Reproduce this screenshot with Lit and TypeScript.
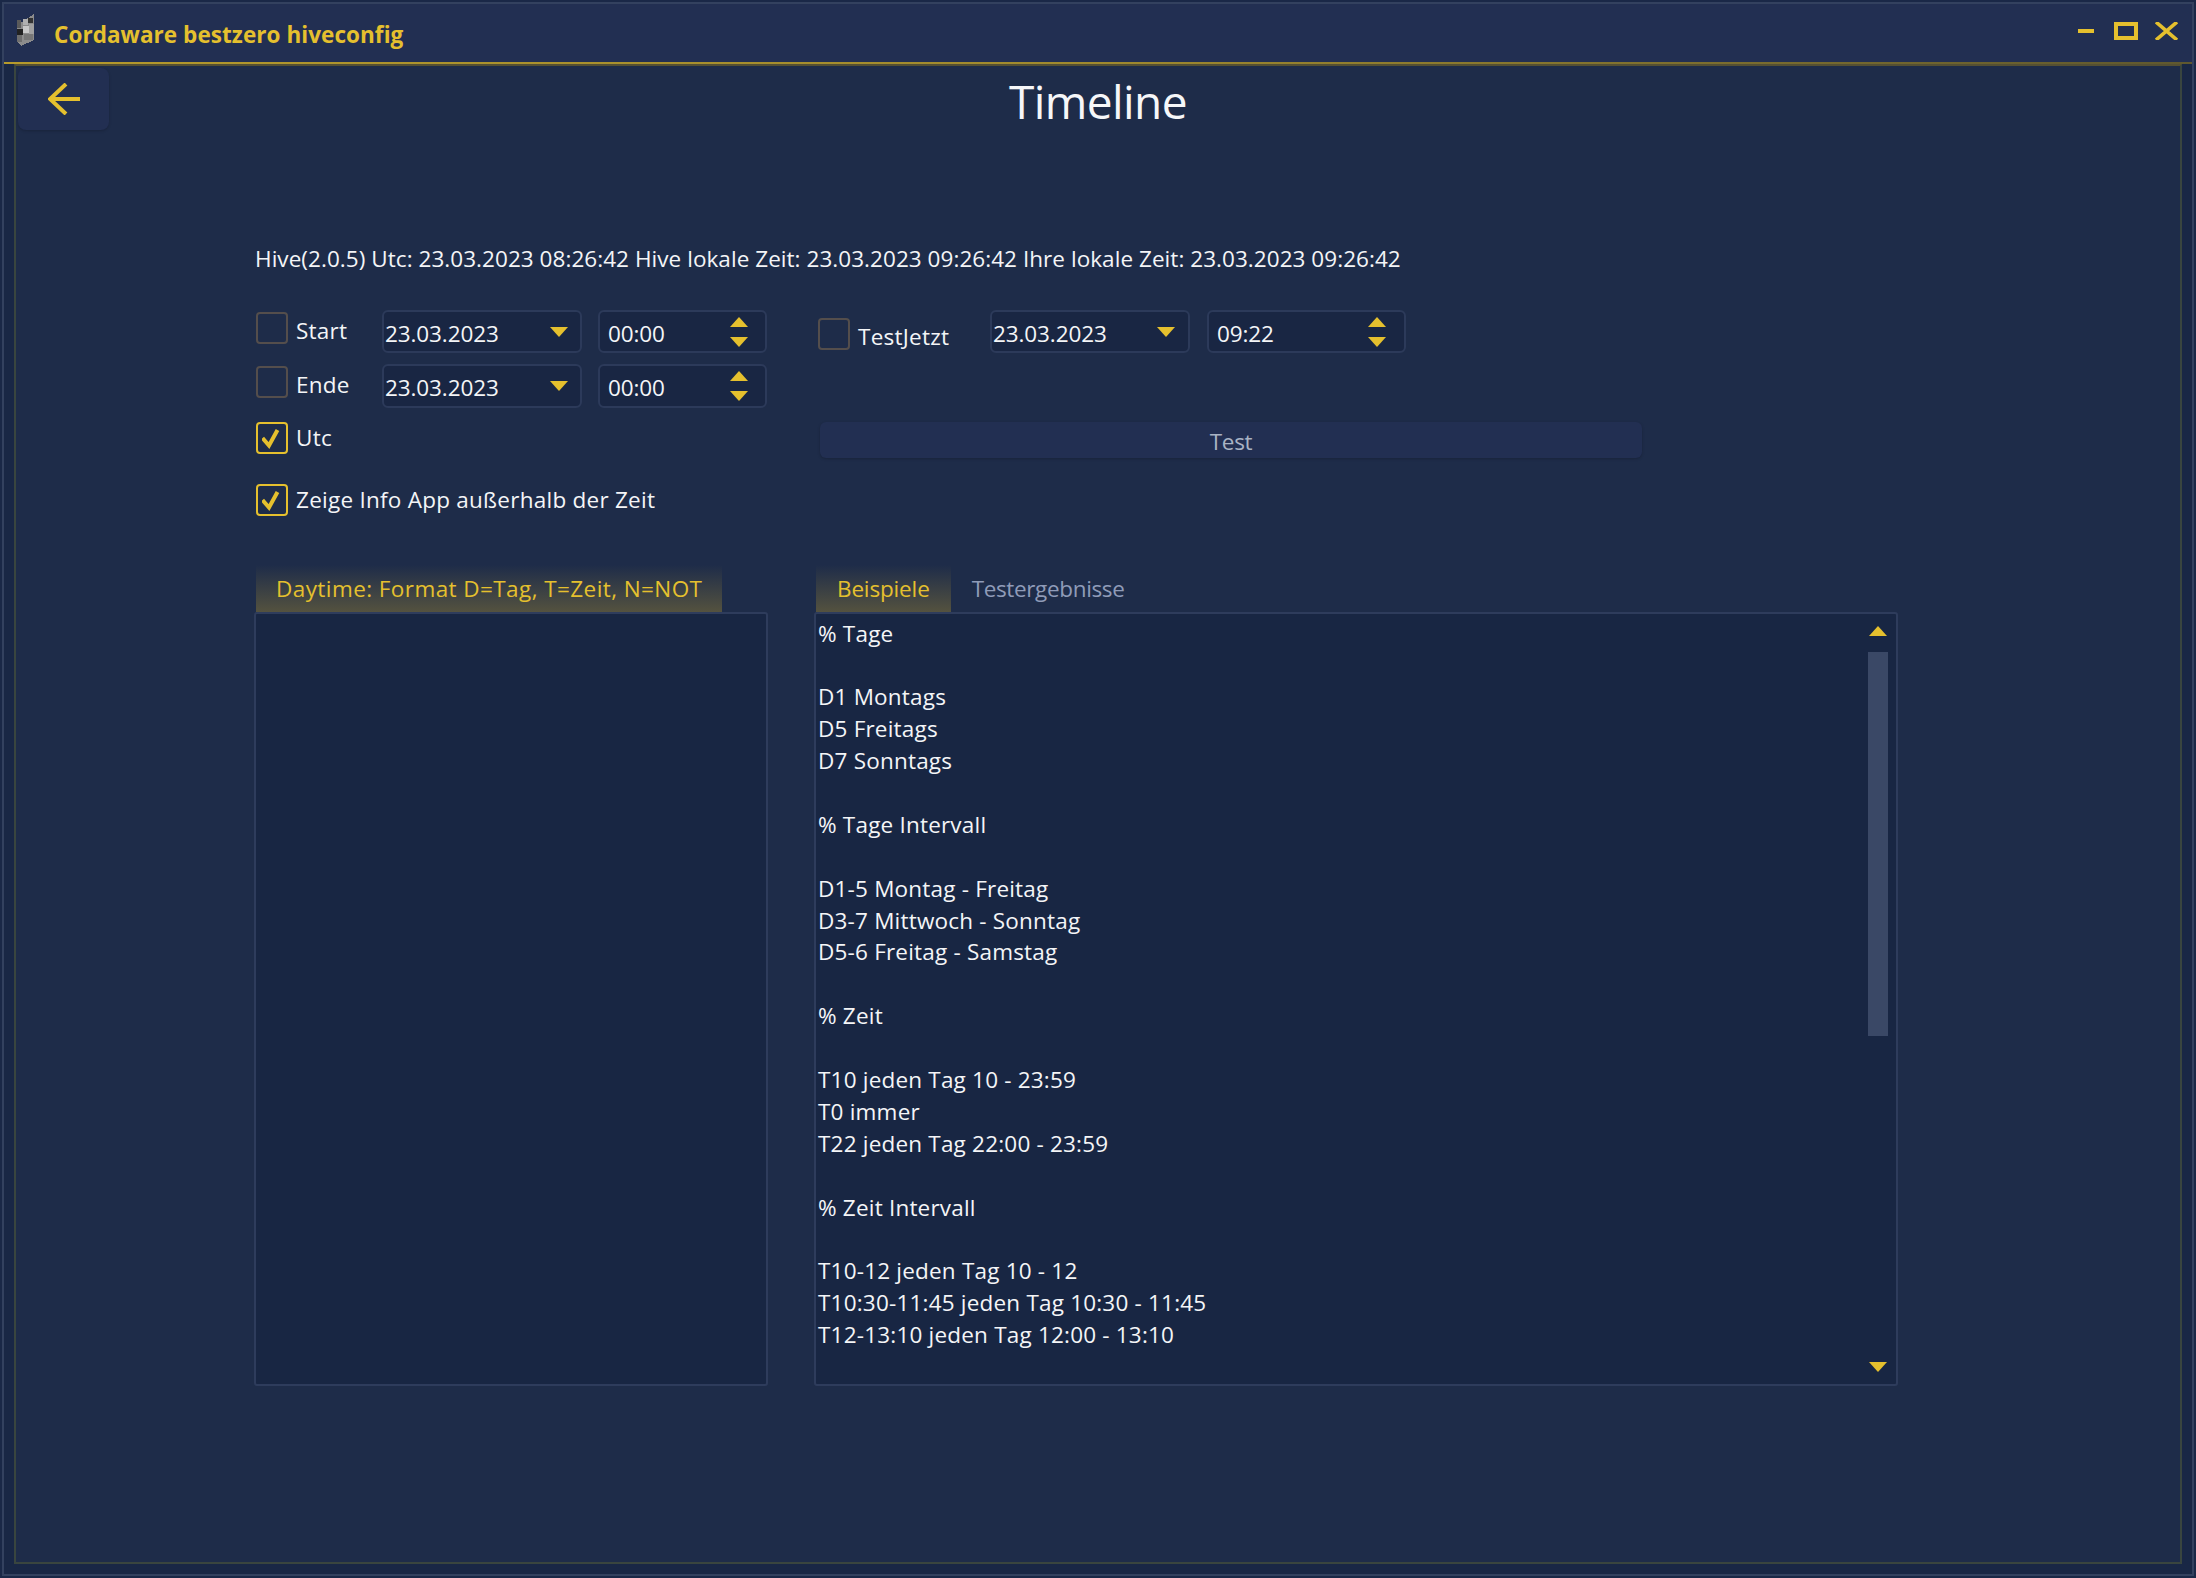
import { LitElement, html, css } from "lit";
import { customElement } from "lit/decorators.js";

const LINES = [
  "% Tage", "", "D1 Montags", "D5 Freitags", "D7 Sonntags", "",
  "% Tage Intervall", "", "D1-5 Montag - Freitag", "D3-7 Mittwoch - Sonntag", "D5-6 Freitag - Samstag", "",
  "% Zeit", "", "T10 jeden Tag 10 - 23:59", "T0 immer", "T22 jeden Tag 22:00 - 23:59", "",
  "% Zeit Intervall", "", "T10-12 jeden Tag 10 - 12", "T10:30-11:45 jeden Tag 10:30 - 11:45", "T12-13:10 jeden Tag 12:00 - 13:10",
];

const up = (w = 18, h = 10) => html`<svg class="tri" width=${w} height=${h} viewBox="0 0 18 10"><polygon points="9,0 18,10 0,10" /></svg>`;
const down = (w = 18, h = 10) => html`<svg class="tri" width=${w} height=${h} viewBox="0 0 18 10"><polygon points="0,0 18,0 9,10" /></svg>`;

@customElement("app-root")
export class AppRoot extends LitElement {
  static styles = css`
    :host { display: block; font-family: "Open Sans", "Noto Sans", sans-serif; font-size: 22.5px; letter-spacing: 0.1px; color: #f4f5f7; }
    * { box-sizing: border-box; }
    .root { width: 2196px; height: 1578px; padding: 2px; background: #1a2847; }
    .frame { height: 100%; border: 2px solid #33415f; display: flex; flex-direction: column; background: #192745; }
    .titlebar { height: 60px; flex: none; background: #222f52; border-bottom: 2px solid; border-image: linear-gradient(90deg, #b59a2c 0%, #a08a2e 50%, #5f582f 100%) 1; display: flex; align-items: center; position: relative; }
    .appicon { margin-left: 13px; margin-top: -6px; flex: none; }
    .apptitle { margin-left: 19px; margin-top: 2px; font-weight: 700; font-size: 22.5px; letter-spacing: 0.06px; color: #e5c02e; white-space: nowrap; }
    .winbtns { margin-left: auto; margin-right: 14px; margin-top: -4px; display: flex; align-items: center; gap: 20px; }
    .winbtns svg { display: block; }
    .winbtns svg:last-child { margin-left: -3px; }
    .main { flex: 1; margin: 0 10px 10px 10px; border: 2px solid #39453f; border-top-color: #555033; background: #1e2c49; min-height: 0; }
    .header { height: 176px; display: grid; grid-template-columns: 1fr auto 1fr; align-items: start; }
    .back { margin: 2px 0 0 2px; width: 91px; height: 62px; background: #222f52; border-radius: 8px; box-shadow: 0 1px 3px rgba(0,0,0,.2); display: flex; align-items: center; justify-content: center; }
    .title { font-size: 46px; letter-spacing: -0.6px; line-height: 62px; color: #f6f7f9; margin-top: 4px; }
    .body { padding-left: 238px; }
    .info { height: 32px; line-height: 34px; white-space: nowrap; letter-spacing: 0.05px; padding-left: 1px; }
    .grid { margin-top: 36px; display: grid; grid-template-columns: 514px 1084px; grid-template-rows: 255px 47px 774px; column-gap: 46px; }
    .form-left { padding-left: 2px; display: flex; flex-direction: column; gap: 11px; }
    .form-right { padding-left: 4px; }
    .row { display: flex; align-items: flex-start; height: 43px; }
    .row.second { height: 44px; }
    .row.plain { height: 32px; }
    .row.utc { margin-top: 1px; }
    .row.info-app { margin-top: 19px; }
    .check { display: flex; align-items: flex-start; gap: 8px; width: 126px; margin-top: 2px; letter-spacing: 0.25px; }
    .check.wide { width: auto; }
    .form-right .check { width: 172px; margin-top: 8px; }
    .box { width: 32px; height: 32px; flex: none; border: 2px solid #544e4c; border-radius: 4px; display: flex; align-items: center; justify-content: center; }
    .box.on { border-color: #e5c02e; }
    .label { line-height: 32px; white-space: nowrap; }
    .row:not(.plain) .label { margin-top: 3px; }
    .form-right .row .label { margin-top: 3px; }
    .field { height: 100%; background: #192643; border: 2px solid #2c3a5a; border-radius: 6px; display: flex; align-items: center; justify-content: space-between; letter-spacing: -0.1px; }
    .second .field span { margin-top: -2px; }
    .date { width: 200px; padding: 4px 12px 0 1px; }
    .time { width: 169px; margin-left: 16px; padding: 4px 17px 0 8px; }
    .form-right .date { width: 200px; padding-right: 13px; padding-left: 1px; }
    .form-right .time { width: 199px; margin-left: 17px; padding-right: 18px; }
    .date .tri { margin-top: -4px; }
    .spin { display: flex; flex-direction: column; gap: 10px; margin-top: -4px; }
    .tri { display: block; fill: #e5c02e; }
    .testbtn { margin: 69px 0 0 2px; width: 822px; height: 36px; background: #222f52; border-radius: 6px; box-shadow: 0 1px 3px rgba(0,0,0,.2); color: #a9b3c4; text-align: center; line-height: 40px; letter-spacing: -0.3px; }
    .tabs { display: flex; align-items: stretch; padding-left: 2px; }
    .tab { padding: 0 21px; line-height: 48px; height: 47px; color: #8f9bb8; white-space: nowrap; letter-spacing: -0.35px; }
    .tab.active { color: #e5c02e; background: linear-gradient(180deg, rgba(85,80,60,0) 0%, #54523f 100%); letter-spacing: -0.15px; }
    .tabs.left .tab { letter-spacing: 0.42px; padding: 0 20px; }
    .panel { background: #182643; border: 2px solid #2e3c5c; border-radius: 3px; min-height: 0; }
    .panel.text { display: flex; justify-content: space-between; overflow: hidden; }
    .lines { padding: 3.5px 0 0 2px; line-height: 31.9px; white-space: pre; letter-spacing: 0.2px; }
    .line { height: 31.9px; }
    .scroll { width: 20px; margin-right: 8px; display: flex; flex-direction: column; align-items: center; padding: 12px 0 12px; }
    .thumb { width: 20px; height: 384px; background: #3a4866; margin-top: 16px; }
    .grow { flex: 1; }
  `;

  private field(cls: string, text: string, spin: boolean) {
    return html`<div class="field ${cls}"><span>${text}</span>${spin
      ? html`<div class="spin">${up()}${down()}</div>`
      : down()}</div>`;
  }

  private check(text: string, on: boolean, wide = false) {
    return html`<div class="check ${wide ? "wide" : ""}"><div class="box ${on ? "on" : ""}">${on
      ? html`<svg width="20" height="22" viewBox="0 0 20 22"><path d="M0.5 11 L7 18.5 L15.5 3" fill="none" stroke="#e5c02e" stroke-width="4"/></svg>`
      : ""}</div><span class="label">${text}</span></div>`;
  }

  render() {
    return html`<div class="root"><div class="frame">
      <div class="titlebar">
        <svg class="appicon" width="18" height="32" viewBox="0 0 18 32" shape-rendering="crispEdges">
          <polygon points="0,6 5,8 17,0 17,26 4,32 0,28" fill="#8c8c8c" />
          <rect x="0" y="6" width="4" height="8" fill="#5a5a5a" />
          <rect x="0" y="15" width="6" height="6" fill="#222222" />
          <rect x="0" y="21" width="5" height="7" fill="#6e6e6e" />
          <rect x="6" y="5" width="5" height="6" fill="#b0b0b0" />
          <rect x="11" y="4" width="5" height="5" fill="#333333" />
          <rect x="6" y="12" width="6" height="7" fill="#c8c8c8" />
          <rect x="12" y="10" width="5" height="10" fill="#a0a0a0" />
          <rect x="7" y="20" width="9" height="6" fill="#777777" />
        </svg>
        <span class="apptitle">Cordaware bestzero hiveconfig</span>
        <div class="winbtns">
          <svg width="16" height="4" viewBox="0 0 16 4"><rect width="16" height="4" fill="#e5c02e"/></svg>
          <svg width="24" height="18" viewBox="0 0 24 18"><rect x="2" y="2" width="20" height="14" fill="none" stroke="#e5c02e" stroke-width="4"/></svg>
          <svg width="23" height="18" viewBox="0 0 23 18"><path d="M1 0 L22 18 M22 0 L1 18" stroke="#e5c02e" stroke-width="3.6" fill="none"/></svg>
        </div>
      </div>
      <div class="main">
        <div class="header">
          <div class="back">
            <svg width="32" height="32" viewBox="0 0 32 32"><path d="M32 16 H2 M18 1 L2 16 L18 31" fill="none" stroke="#e5c02e" stroke-width="4"/></svg>
          </div>
          <div class="title">Timeline</div>
          <div></div>
        </div>
        <div class="body">
          <div class="info">Hive(2.0.5) Utc: 23.03.2023 08:26:42 Hive lokale Zeit: 23.03.2023 09:26:42 Ihre lokale Zeit: 23.03.2023 09:26:42</div>
          <div class="grid">
            <div class="form-left">
              <div class="row">${this.check("Start", false)}${this.field("date", "23.03.2023", false)}${this.field("time", "00:00", true)}</div>
              <div class="row second">${this.check("Ende", false)}${this.field("date", "23.03.2023", false)}${this.field("time", "00:00", true)}</div>
              <div class="row plain utc">${this.check("Utc", true, true)}</div>
              <div class="row plain info-app">${this.check("Zeige Info App außerhalb der Zeit", true, true)}</div>
            </div>
            <div class="form-right">
              <div class="row">${this.check("TestJetzt", false)}${this.field("date", "23.03.2023", false)}${this.field("time", "09:22", true)}</div>
              <div class="testbtn">Test</div>
            </div>
            <div class="tabs left"><div class="tab active">Daytime: Format D=Tag, T=Zeit, N=NOT</div></div>
            <div class="tabs right"><div class="tab active">Beispiele</div><div class="tab">Testergebnisse</div></div>
            <div class="panel"></div>
            <div class="panel text">
              <div class="lines">${LINES.map((l) => html`<div class="line">${l}</div>`)}</div>
              <div class="scroll">${up()}<div class="thumb"></div><div class="grow"></div>${down()}</div>
            </div>
          </div>
        </div>
      </div>
    </div></div>`;
  }
}
